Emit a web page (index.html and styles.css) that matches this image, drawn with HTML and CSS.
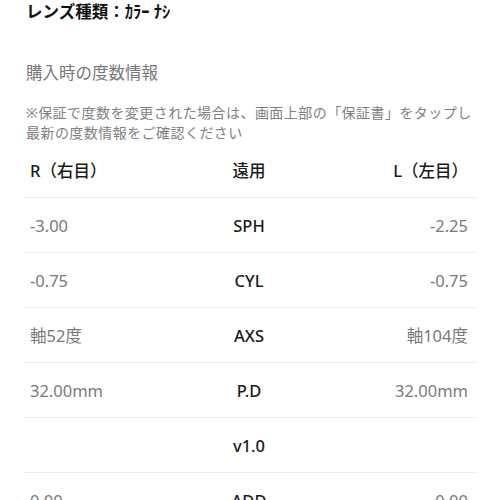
FILE: index.html
```html
<!DOCTYPE html>
<html lang="ja">
<head>
<meta charset="utf-8">
<link rel="stylesheet" href="styles.css">
</head>
<body>
<div class="page">
  <h1 class="lens">レンズ種類：ｶﾗｰ ﾅｼ</h1>
  <h2 class="section">購入時の度数情報</h2>
  <p class="note">※保証で度数を変更された場合は、画面上部の「保証書」をタップし<br>最新の度数情報をご確認ください</p>
  <div class="table">
    <div class="row head">
      <div class="l">R（右目）</div>
      <div class="c">遠用</div>
      <div class="r">L（左目）</div>
    </div>
    <div class="row">
      <div class="l val">-3.00</div>
      <div class="c">SPH</div>
      <div class="r val">-2.25</div>
    </div>
    <div class="row">
      <div class="l val">-0.75</div>
      <div class="c">CYL</div>
      <div class="r val">-0.75</div>
    </div>
    <div class="row">
      <div class="l val">軸52度</div>
      <div class="c">AXS</div>
      <div class="r val">軸104度</div>
    </div>
    <div class="row">
      <div class="l val">32.00mm</div>
      <div class="c">P.D</div>
      <div class="r val">32.00mm</div>
    </div>
    <div class="row">
      <div class="l val"></div>
      <div class="c">v1.0</div>
      <div class="r val"></div>
    </div>
    <div class="row">
      <div class="l val">0.00</div>
      <div class="c">ADD</div>
      <div class="r val">0.00</div>
    </div>
  </div>
</div>
</body>
</html>
```
FILE: styles.css
```css
html, body {
  margin: 0;
  padding: 0;
  background: #fff;
}
body {
  font-family: "Noto Sans", "Noto Sans CJK JP", sans-serif;
  color: #1a1a1a;
}
.page {
  padding: 0 24px;
}
.lens {
  margin: 0;
  padding-left: 2px;
  font-size: 16.5px;
  line-height: 24px;
  font-weight: 700;
  color: #111;
}
.section {
  margin: 37px 0 0;
  padding-left: 2px;
  font-size: 16.5px;
  line-height: 24px;
  font-weight: 400;
  color: #777;
}
.note {
  margin: 18px 0 0;
  padding-left: 2px;
  font-size: 14px;
  line-height: 20px;
  letter-spacing: 0.45px;
  color: #808080;
  white-space: nowrap;
}
.table {
  display: flex;
  flex-direction: column;
}
.row {
  display: grid;
  grid-template-columns: 1fr 1fr 1fr;
  align-items: center;
  height: 54px;
  border-bottom: 1px solid #ededed;
  padding: 0 8px 0 6px;
  font-size: 16.5px;
}
.row .l { text-align: left; }
.row .c { text-align: center; font-weight: 500; color: #1a1a1a; }
.row .r { text-align: right; }
.row .val { color: #7a7a7a; }
.head .l, .head .r { font-weight: 500; color: #1a1a1a; }
.head .c { font-weight: 500; }
```
